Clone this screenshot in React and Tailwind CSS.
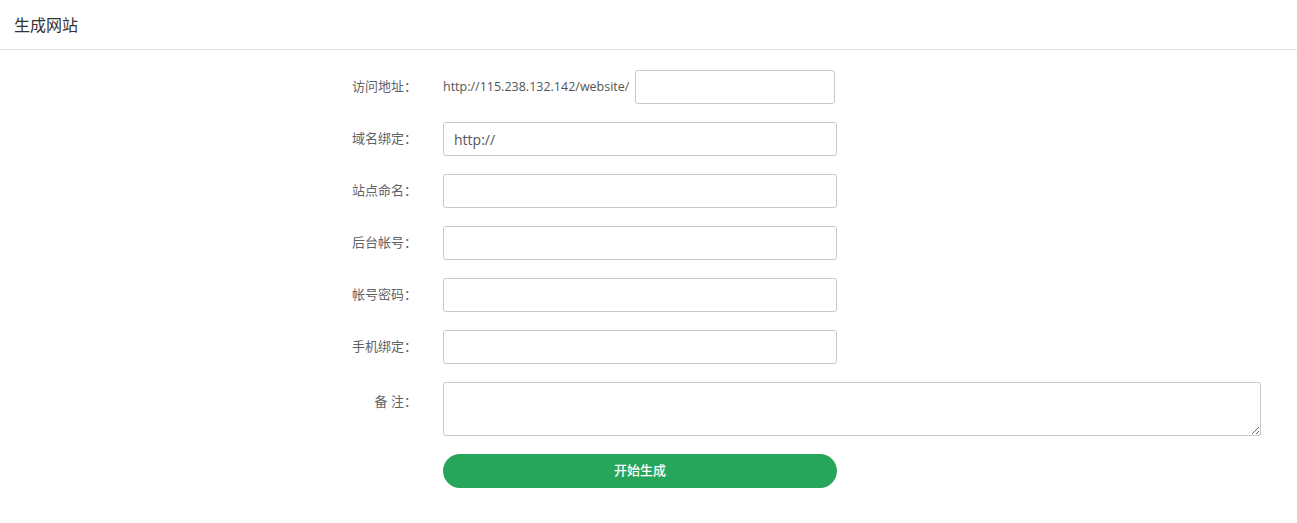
const rows = [
  { label: '域名绑定：', placeholder: 'http://' },
  { label: '站点命名：' },
  { label: '后台帐号：' },
  { label: '帐号密码：' },
  { label: '手机绑定：' },
];

const Label = ({ children }) => (
  <div className="w-[417px] shrink-0 text-right text-[13px] text-[#5f6368]">{children}</div>
);

export default function App() {
  return (
    <div className="min-h-screen bg-white font-['Open_Sans','Noto_Sans_CJK_SC',sans-serif]">
      {/* Header */}
      <div className="h-[50px] border-b border-[#e5e5e5] flex items-center px-[14px]">
        <h1 className="text-[16px] text-[#333]">生成网站</h1>
      </div>

      {/* Form */}
      <div className="pt-[20px] flex flex-col gap-[18px]">
        <div className="flex items-center h-[34px]">
          <Label>访问地址：</Label>
          <div className="ml-[26px] flex items-center">
            <span className="text-[12.5px] text-[#555]">http://115.238.132.142/website/</span>
            <input className="ml-[6px] w-[200px] h-[34px] border border-[#c5c8ce] rounded-[3px] px-[10px] text-[14px] text-[#555] outline-none" />
          </div>
        </div>

        {rows.map((r) => (
          <div key={r.label} className="flex items-center h-[34px]">
            <Label>{r.label}</Label>
            <input
              defaultValue={r.placeholder || ''}
              className="ml-[26px] w-[394px] h-[34px] border border-[#c5c8ce] rounded-[3px] px-[10px] text-[14px] text-[#555] outline-none"
            />
          </div>
        ))}

        <div className="flex items-start">
          <div className="pt-[10px]">
            <Label>备 注：</Label>
          </div>
          <textarea className="ml-[26px] w-[818px] h-[54px] border border-[#c5c8ce] rounded-[3px] px-[10px] py-[6px] text-[14px] text-[#555] outline-none resize-y" />
        </div>

        <div className="flex">
          <div className="w-[417px] shrink-0" />
          <button className="ml-[26px] w-[394px] h-[34px] rounded-full bg-[#27a65b] text-white text-[13px] font-medium">
            开始生成
          </button>
        </div>
      </div>
    </div>
  );
}
